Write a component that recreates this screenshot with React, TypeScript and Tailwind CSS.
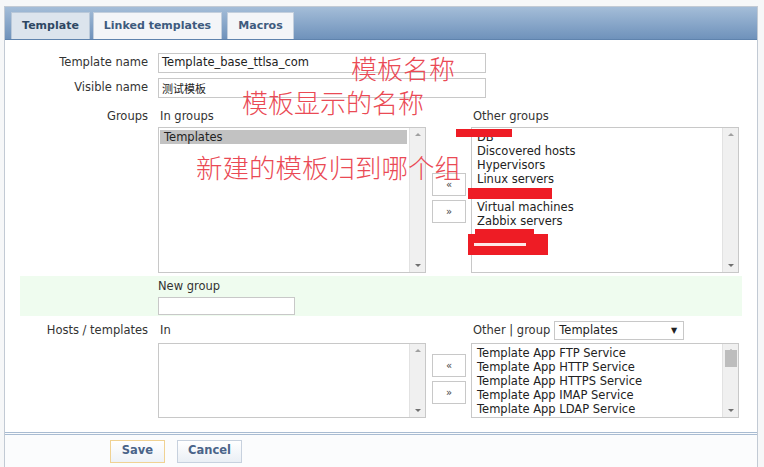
import React from "react";

const FONT = { fontFamily: '"DejaVu Sans", Verdana, sans-serif' };
const CJK = { fontFamily: '"Noto Sans CJK SC", "Noto Sans", sans-serif' };

function Scrollbar({ thumb }: { thumb?: boolean }) {
  return (
    <div className="w-[16px] h-full bg-[#f0f0f0] border-l border-[#e2e2e2] flex flex-col items-center justify-between py-[5px]">
      <div className="w-0 h-0 border-l-[3px] border-r-[3px] border-b-[3px] border-l-transparent border-r-transparent border-b-[#a0a0a0]" />
      {thumb ? <div className="w-[12px] h-[17px] bg-[#bdbdbd] -mt-[2px]" /> : null}
      <div className="flex-1" />
      <div className="w-0 h-0 border-l-[3px] border-r-[3px] border-t-[3px] border-l-transparent border-r-transparent border-t-[#707070]" />
    </div>
  );
}

function ListBox({
  items,
  selected,
  h,
  thumb,
}: {
  items: string[];
  selected?: number;
  h: string;
  thumb?: boolean;
}) {
  return (
    <div className={`relative w-[268px] ${h} border border-[#c8c8c8] bg-white flex`}>
      <div className="flex-1 pt-[2px] pl-[1px] pr-[2px] text-[11.5px] leading-[14px] text-[#222]">
        {items.map((it, i) => (
          <div key={i} className={`pl-[4px] h-[14px] whitespace-nowrap ${selected === i ? "bg-[#c2c2c2]" : ""}`}>
            {it}
          </div>
        ))}
      </div>
      <Scrollbar thumb={thumb} />
    </div>
  );
}

function MoveButtons({ top }: { top: string }) {
  return (
    <div className={`flex flex-col gap-[4px] ml-[6px] mr-[5px] ${top}`}>
      <div className="w-[34px] h-[23px] border border-[#c8c8c8] bg-white flex items-center justify-center text-[10px] text-[#444]">«</div>
      <div className="w-[34px] h-[23px] border border-[#c8c8c8] bg-white flex items-center justify-center text-[10px] text-[#444]">»</div>
    </div>
  );
}

export default function App() {
  return (
    <div className="relative w-[764px] h-[467px] bg-[#f6f7f8] overflow-hidden" style={FONT}>
      <div className="pt-[6px] pl-[4px]">
        <div className="w-[754px] h-[461px] border-l border-r border-t border-[#c2cad4] bg-white flex flex-col">
          {/* tab bar */}
          <div className="h-[33px] bg-gradient-to-b from-[#a4bdd8] to-[#6f92bb] border-b border-[#5f83ad] flex items-end pl-[6px] gap-[3px] shrink-0">
            <div className="w-[79px] h-[27px] bg-[#dce4ed] border border-b-0 border-[#b9c8d9] flex items-center justify-center text-[11px] font-bold text-[#2e4763]">
              Template
            </div>
            <div className="w-[129px] h-[27px] bg-[#f3f5f8] border border-b-0 border-[#c3cfdd] flex items-center justify-center text-[11px] font-bold text-[#3e5b7e]">
              Linked templates
            </div>
            <div className="w-[67px] h-[27px] ml-[2px] bg-[#f3f5f8] border border-b-0 border-[#c3cfdd] flex items-center justify-center text-[11px] font-bold text-[#3e5b7e]">
              Macros
            </div>
          </div>

          {/* form */}
          <div className="flex-1 pt-[13px] text-[11.5px] text-[#333]">
            <div className="flex items-center h-[20px]">
              <div className="w-[143px] text-right">Template name</div>
              <div className="ml-[10px] w-[328px] h-[20px] border border-[#c8c8c8] bg-white pl-[3px] flex items-center text-[#222]">
                Template_base_ttlsa_com
              </div>
            </div>
            <div className="flex items-center h-[20px] mt-[5px]">
              <div className="w-[143px] text-right">Visible name</div>
              <div className="ml-[10px] w-[328px] h-[20px] border border-[#c8c8c8] bg-white pl-[3px] flex items-center text-[11px] text-[#222]" style={CJK}>
                测试模板
              </div>
            </div>

            <div className="flex items-center h-[14px] mt-[12px]">
              <div className="w-[143px] text-right">Groups</div>
              <div className="ml-[12px] w-[313px]">In groups</div>
              <div>Other groups</div>
            </div>
            <div className="flex mt-[3px] ml-[153px]">
              <ListBox items={["Templates"]} selected={0} h="h-[146px]" />
              <MoveButtons top="mt-[46px]" />
              <ListBox
                items={["DB", "Discovered hosts", "Hypervisors", "Linux servers", "", "Virtual machines", "Zabbix servers", ""]}
                h="h-[146px]"
              />
            </div>

            {/* green row */}
            <div className="mt-[3px] ml-[15px] w-[722px] h-[40px] bg-[#effcef] pl-[138px] pt-[3px]">
              <div className="h-[14px] leading-[14px]">New group</div>
              <div className="mt-[4px] w-[137px] h-[18px] border border-[#c8c8c8] bg-white" />
            </div>

            <div className="flex items-center h-[19px] mt-[5px]">
              <div className="w-[143px] text-right">Hosts / templates</div>
              <div className="ml-[12px] w-[313px]">In</div>
              <div>Other | group</div>
              <div className="ml-[4px] w-[130px] h-[19px] border border-[#c8c8c8] bg-white flex items-center justify-between pl-[4px] pr-[6px] text-[#222]">
                <span>Templates</span>
                <span className="text-[8px]">▼</span>
              </div>
            </div>
            <div className="flex mt-[3px] ml-[153px]">
              <ListBox items={[]} h="h-[75px]" />
              <MoveButtons top="mt-[11px]" />
              <ListBox
                items={[
                  "Template App FTP Service",
                  "Template App HTTP Service",
                  "Template App HTTPS Service",
                  "Template App IMAP Service",
                  "Template App LDAP Service",
                ]}
                h="h-[75px]"
                thumb
              />
            </div>
          </div>

          {/* footer */}
          <div className="h-[35px] shrink-0 border-t-[3px] border-double border-[#a9bcd2] bg-[#fbfcfd] flex items-center pl-[105px] gap-[12px]">
            <div className="w-[55px] h-[23px] border border-[#f0d293] bg-gradient-to-b from-[#ffffff] to-[#eef2f7] flex items-center justify-center text-[11.5px] font-bold text-[#4a6489]">
              Save
            </div>
            <div className="w-[65px] h-[23px] border border-[#c7d1de] bg-gradient-to-b from-[#ffffff] to-[#eaeff5] flex items-center justify-center text-[11.5px] font-bold text-[#4a6489]">
              Cancel
            </div>
          </div>
        </div>
      </div>

      {/* redaction marks */}
      <div className="absolute left-[456px] top-[129px] w-[56px] h-[8px] bg-[#ee1c25]" />
      <div className="absolute left-[468px] top-[188px] w-[84px] h-[11px] bg-[#ee1c25]" />
      <div className="absolute left-[475px] top-[229px] w-[59px] h-[6px] bg-[#ee1c25]" />
      <div className="absolute left-[468px] top-[234px] w-[80px] h-[21px] bg-[#ee1c25] flex items-center pl-[6px]">
        <div className="w-[52px] h-[3px] bg-white opacity-90" />
      </div>

      {/* annotations */}
      <div className="absolute left-[351px] top-[51px] text-[26px] leading-[34px] font-light text-[#ea4a55]" style={CJK}>
        模板名称
      </div>
      <div className="absolute left-[242px] top-[85px] text-[26px] leading-[34px] font-light text-[#ea4a55]" style={CJK}>
        模板显示的名称
      </div>
      <div className="absolute left-[196px] top-[150px] text-[26.5px] leading-[34px] font-light text-[#ea4a55]" style={CJK}>
        新建的模板归到哪个组
      </div>
    </div>
  );
}
